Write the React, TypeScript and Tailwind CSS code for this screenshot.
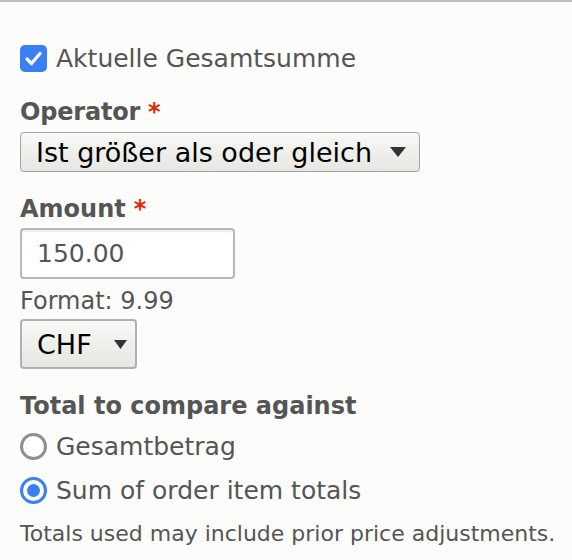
import React from "react";

const font = { fontFamily: '"DejaVu Sans", "Liberation Sans", sans-serif' };

function Arrow({ w, h }: { w: number; h: number }) {
  return (
    <svg width={w} height={h} viewBox={`0 0 ${w} ${h}`} className="shrink-0">
      <polygon points={`0,0 ${w},0 ${w / 2},${h}`} fill="#333" />
    </svg>
  );
}

export default function App() {
  return (
    <div
      className="w-[572px] h-[560px] bg-[#fcfcfa] border-t-2 border-[#bdbdbb] pl-5 overflow-hidden"
      style={font}
    >
      <div className="flex items-center mt-[42px] h-[28px]">
        <span className="w-[27px] h-[27px] rounded-[5px] bg-[#3a7ff6] flex items-center justify-center">
          <svg width="19" height="17" viewBox="0 0 19 17">
            <path d="M3 9 L7.5 13.5 L16 3.5" fill="none" stroke="#fff" strokeWidth="3.2" strokeLinecap="round" strokeLinejoin="round" />
          </svg>
        </span>
        <span className="ml-[9px] text-[25px] leading-none text-[#555]">Aktuelle Gesamtsumme</span>
      </div>

      <div className="mt-[28px] h-[24px] flex items-start text-[24px] font-bold leading-[24px] tracking-[-0.2px] text-[#555]">
        Operator<span className="ml-[8px] text-[#e32700]">*</span>
      </div>
      <div className="mt-[8px] w-[400px] h-[40px] rounded-[4px] border-[1.5px] border-[#a4a4a4] bg-gradient-to-b from-[#f8f8f6] to-[#e6e6e2] flex items-center justify-between pl-[15px] pr-[13px] text-[27px] leading-none text-black">
        <span>Ist größer als oder gleich</span>
        <Arrow w={16} h={10} />
      </div>

      <div className="mt-[25px] h-[24px] flex items-start text-[24px] font-bold leading-[24px] text-[#555]">
        Amount<span className="ml-[8px] text-[#e32700]">*</span>
      </div>
      <div className="mt-[7px] w-[215px] h-[51px] rounded-[4px] border-2 border-[#b8b8b8] bg-white shadow-[inset_0_2px_2px_rgba(0,0,0,0.07)] flex items-center pl-[15px] text-[25px] leading-none text-[#555]">
        150.00
      </div>
      <div className="mt-[10px] h-[24px] text-[24px] leading-[24px] text-[#555]">Format: 9.99</div>
      <div className="mt-[6px] w-[117px] h-[50px] rounded-[4px] border-2 border-[#b0b0b0] bg-gradient-to-b from-[#f8f8f6] to-[#e6e6e2] flex items-center justify-between pl-[15px] pr-[8px] text-[27px] leading-none text-black">
        <span>CHF</span>
        <Arrow w={13} h={9} />
      </div>

      <div className="mt-[25px] h-[24px] text-[24px] font-bold leading-[24px] text-[#555]">Total to compare against</div>
      <div className="mt-[15px] flex items-center h-[26px]">
        <span className="w-[27px] h-[27px] rounded-full border-[3px] border-[#8e8e93] bg-white" />
        <span className="ml-[9px] text-[25px] leading-none text-[#555]">Gesamtbetrag</span>
      </div>
      <div className="mt-[18px] flex items-center h-[26px]">
        <span className="w-[27px] h-[27px] rounded-full border-[3px] border-[#3a7ff6] bg-white flex items-center justify-center">
          <span className="w-[13px] h-[13px] rounded-full bg-[#3a7ff6]" />
        </span>
        <span className="ml-[9px] text-[25px] leading-none text-[#555]">Sum of order item totals</span>
      </div>
      <div className="mt-[20px] h-[22px] text-[22px] leading-[22px] text-[#555]">Totals used may include prior price adjustments.</div>
    </div>
  );
}
